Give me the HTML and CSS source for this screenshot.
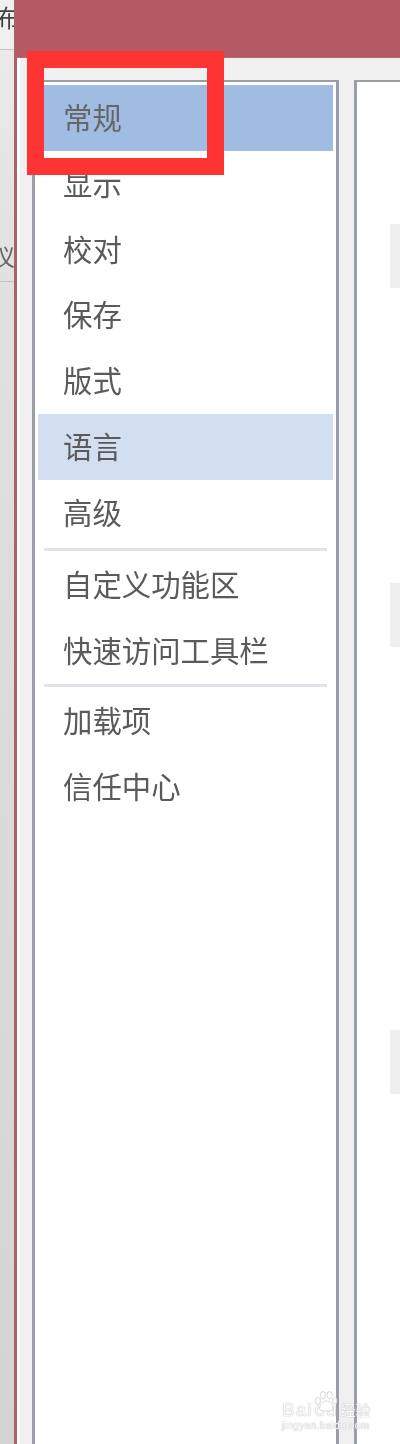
FILE: index.html
```html
<!DOCTYPE html>
<html lang="zh-CN">
<head>
<meta charset="utf-8">
<title>选项</title>
<link rel="stylesheet" href="styles.css">
</head>
<body>
<div class="page">
  <aside class="backdrop">
    <div class="back-row back-row-top"><span class="back-text">布</span></div>
    <div class="back-row back-row-mid"><span class="back-text back-text-low">仪</span></div>
  </aside>
  <main class="dialog">
    <header class="titlebar"></header>
    <div class="panes">
      <nav class="nav">
        <div class="item selected">常规</div>
        <div class="item">显示</div>
        <div class="item">校对</div>
        <div class="item">保存</div>
        <div class="item">版式</div>
        <div class="item hover">语言</div>
        <div class="item">高级</div>
        <div class="divider divider-1"></div>
        <div class="item">自定义功能区</div>
        <div class="item">快速访问工具栏</div>
        <div class="divider divider-2"></div>
        <div class="item">加载项</div>
        <div class="item">信任中心</div>
      </nav>
      <section class="content">
        <div class="heading heading-1"></div>
        <div class="heading heading-2"></div>
        <div class="heading heading-3"></div>
      </section>
    </div>
  </main>
  <div class="callout"></div>
  <div class="watermark">
    <svg class="paw" viewBox="0 0 30 26" aria-hidden="true">
      <ellipse cx="6" cy="13" rx="3" ry="4.5"/>
      <ellipse cx="12" cy="6" rx="3" ry="4.5"/>
      <ellipse cx="20" cy="6" rx="3" ry="4.5"/>
      <ellipse cx="26" cy="13" rx="2.6" ry="4"/>
      <path d="M16 13c-5 0-8 5-8 9 0 3 3 3 8 3s8 0 8-3c0-4-3-9-8-9z"/>
    </svg>
    <div class="wm-logo"><span>Bai</span><span class="wm-du">du</span><span class="wm-cn">经验</span></div>
    <div class="wm-url">jingyan.baidu.com</div>
  </div>
</div>
</body>
</html>
```
FILE: styles.css
```css
* { box-sizing: border-box; }
html, body { margin: 0; padding: 0; background: #fff; }
.page {
  position: relative;
  display: flex;
  width: 400px;
  height: 1444px;
  overflow: hidden;
  font-family: "Noto Sans CJK SC", "Noto Sans", sans-serif;
}
.backdrop {
  flex: 0 0 14px;
  background: linear-gradient(180deg, #ececec 0, #e0e0e0 300px, #d4d4d4 1444px);
  overflow: hidden;
  display: flex;
  flex-direction: column;
}
.back-row { border-bottom: 1px solid #c4c4c4; overflow: hidden; flex: none; }
.back-row-top { height: 50px; background: #f0f0f0; }
.back-row-mid { height: 232px; }
.back-text {
  display: block;
  width: 30px;
  margin-left: -4px;
  font-size: 24px;
  line-height: 34px;
  color: #444;
  filter: blur(0.7px);
}
.back-text-low { margin-top: 189px; margin-left: -9px; color: #666; }
.dialog {
  flex: 1;
  display: flex;
  flex-direction: column;
  min-width: 0;
  background: #f0f0f0;
  border-left: 3px solid #a9626b;
  box-shadow: inset 3px 0 0 #fff;
}
.titlebar {
  flex: 0 0 58px;
  margin-left: -1px;
  background: #b55a64;
  border-bottom: 1px solid #b9666f;
}
.panes {
  flex: 1;
  display: flex;
  gap: 15px;
  padding: 22px 0 0 15px;
  min-height: 0;
}
.nav {
  flex: 0 0 307px;
  background: #fff;
  border: solid #9a9ea6;
  border-width: 2px 3px 0;
  padding: 3px 3px 0;
  filter: blur(0.7px);
}
.item {
  height: 65.8px;
  padding-left: 25px;
  font-size: 29.4px;
  line-height: 62px;
  color: #5a5a5a;
  white-space: nowrap;
}
.selected { background: #a1bce2; color: #666; }
.hover { background: #d2dff1; }
.divider {
  height: 3px;
  margin-left: 6px;
  margin-right: 6px;
  background: #e2e3e8;
}
.divider-1 { margin-top: 2.4px; margin-bottom: 1px; }
.divider-2 { margin-top: 0.5px; margin-bottom: 1px; }
.content {
  flex: 1;
  min-width: 0;
  background: #fff;
  border: solid #9a9ea6;
  border-width: 2px 0 0 3px;
  padding: 142px 0 0 33px;
  display: flex;
  flex-direction: column;
  filter: blur(0.5px);
}
.heading { flex: none; height: 64px; background: #efefef; }
.heading-2 { margin-top: 295px; }
.heading-3 { margin-top: 383px; }
.callout {
  position: absolute;
  left: 27px;
  top: 51px;
  width: 197px;
  height: 124px;
  border: 17px solid #fe3334;
}
.watermark {
  position: absolute;
  left: 282px;
  top: 1384px;
  width: 94px;
  color: rgba(255, 255, 255, 0.92);
  text-shadow: 0 0 1px #bbb, 0 0 1px #bbb;
  filter: blur(0.4px);
}
.paw {
  position: absolute;
  left: 31px;
  top: 6px;
  width: 25px;
  height: 22px;
  fill: #fff;
  stroke: #d0d0d0;
  stroke-width: 1;
}
.wm-logo {
  display: flex;
  align-items: baseline;
  margin-top: 16px;
  font-family: "Liberation Sans", sans-serif;
  font-size: 19px;
  line-height: 20px;
  letter-spacing: 1px;
  white-space: nowrap;
}
.wm-du { margin-left: 2px; }
.wm-cn {
  margin-left: 3px;
  font-family: "Noto Sans CJK SC", sans-serif;
  font-size: 15px;
  letter-spacing: 0;
}
.wm-url {
  font-family: "Liberation Sans", sans-serif;
  font-size: 10px;
  line-height: 12px;
  letter-spacing: 0.4px;
  white-space: nowrap;
}
```
